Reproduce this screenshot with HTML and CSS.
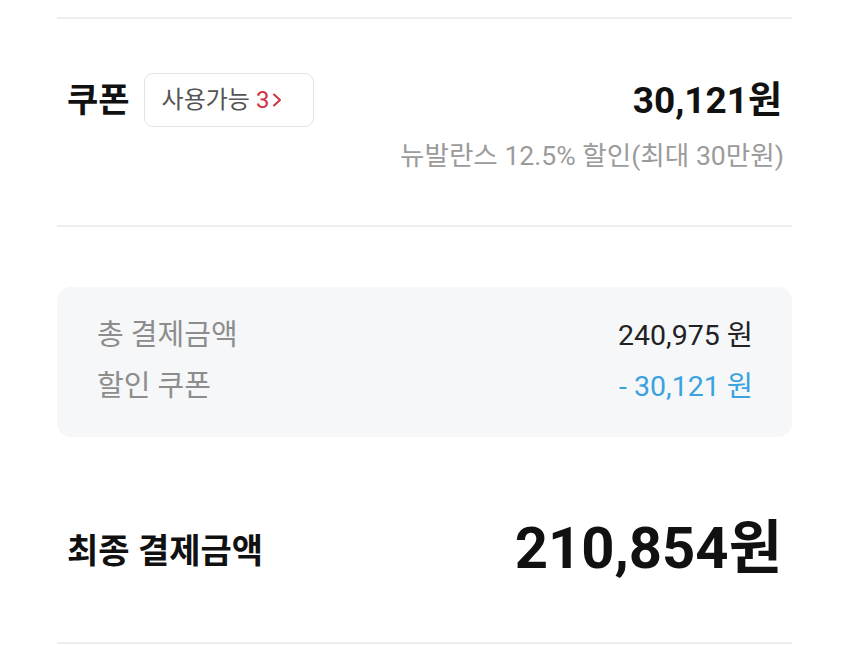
FILE: index.html
```html
<!DOCTYPE html>
<html lang="ko">
<head>
<meta charset="utf-8">
<title>쿠폰</title>
<link rel="stylesheet" href="styles.css">
</head>
<body>
<div class="page">
  <div class="divider"></div>
  <section class="coupon">
    <div class="coupon-row">
      <div class="coupon-left">
        <span class="coupon-title">쿠폰</span>
        <button class="badge" type="button">
          <span class="badge-label">사용가능</span>
          <span class="badge-count">3</span>
          <svg class="chevron" width="10" height="16" viewBox="0 0 10 16" aria-hidden="true"><path d="M2 2.5 L8 8 L2 13.5" fill="none" stroke="#d1323f" stroke-width="2" stroke-linecap="round" stroke-linejoin="round"/></svg>
        </button>
      </div>
      <div class="coupon-amount">30,121원</div>
    </div>
    <div class="coupon-desc">뉴발란스 12.5% 할인(최대 30만원)</div>
  </section>
  <div class="divider"></div>
  <section class="summary">
    <div class="summary-row">
      <span class="summary-label">총 결제금액</span>
      <span class="summary-value">240,975 원</span>
    </div>
    <div class="summary-row">
      <span class="summary-label">할인 쿠폰</span>
      <span class="summary-value discount">- 30,121 원</span>
    </div>
  </section>
  <section class="final">
    <span class="final-label">최종 결제금액</span>
    <span class="final-amount">210,854원</span>
  </section>
  <div class="divider"></div>
</div>
</body>
</html>
```

FILE: styles.css
```css
* { box-sizing: border-box; }
html, body { margin: 0; padding: 0; background: #ffffff; }
body {
  font-family: Roboto, "Noto Sans CJK KR", sans-serif;
  color: #111111;
}
.page {
  width: 849px;
  height: 645px;
  padding: 17px 57px 0;
  overflow: hidden;
}
.divider {
  height: 2px;
  background: #ededed;
}
.coupon {
  padding: 54px 10px 54px 10px;
}
.coupon-row {
  display: flex;
  align-items: center;
  justify-content: space-between;
  height: 54px;
}
.coupon-left {
  display: flex;
  align-items: center;
  gap: 14px;
}
.coupon-title {
  font-size: 34px;
  font-weight: 700;
  line-height: 1;
  color: #111111;
}
.badge {
  display: flex;
  align-items: center;
  height: 54px;
  padding: 0 31px 0 17px;
  border: 1.5px solid #e3e3e3;
  border-radius: 9px;
  background: #ffffff;
  font-family: inherit;
  cursor: pointer;
}
.badge-label {
  font-size: 24px;
  color: #555555;
  line-height: 1;
}
.badge-count {
  font-size: 24px;
  color: #d1323f;
  margin-left: 6px;
  line-height: 1;
}
.chevron {
  margin-left: 3px;
  display: block;
}
.coupon-amount {
  font-size: 37px;
  font-weight: 700;
  line-height: 1;
  color: #111111;
}
.coupon-desc {
  margin-top: 14px;
  text-align: right;
  font-size: 26.6px;
  line-height: 30px;
  color: #9b9b9b;
  margin-right: -2px;
}
.summary {
  margin-top: 60px;
  height: 150px;
  background: #f6f7f9;
  border-radius: 14px;
  padding: 25px 39px 0 40px;
  display: flex;
  flex-direction: column;
  gap: 11px;
}
.summary-row {
  display: flex;
  justify-content: space-between;
  align-items: center;
  height: 40px;
  font-size: 29px;
}
.summary-label {
  color: #8d8d8d;
}
.summary-value {
  color: #222222;
  font-size: 28.5px;
}
.summary-value.discount {
  color: #3aa2df;
}
.final {
  margin-top: 76px;
  height: 70px;
  padding: 0 10px;
  display: flex;
  justify-content: space-between;
  align-items: center;
  margin-bottom: 59px;
}
.final-label {
  font-size: 34px;
  font-weight: 700;
  color: #111111;
}
.final-amount {
  font-size: 58px;
  font-weight: 700;
  color: #111111;
  line-height: 1;
}
```
